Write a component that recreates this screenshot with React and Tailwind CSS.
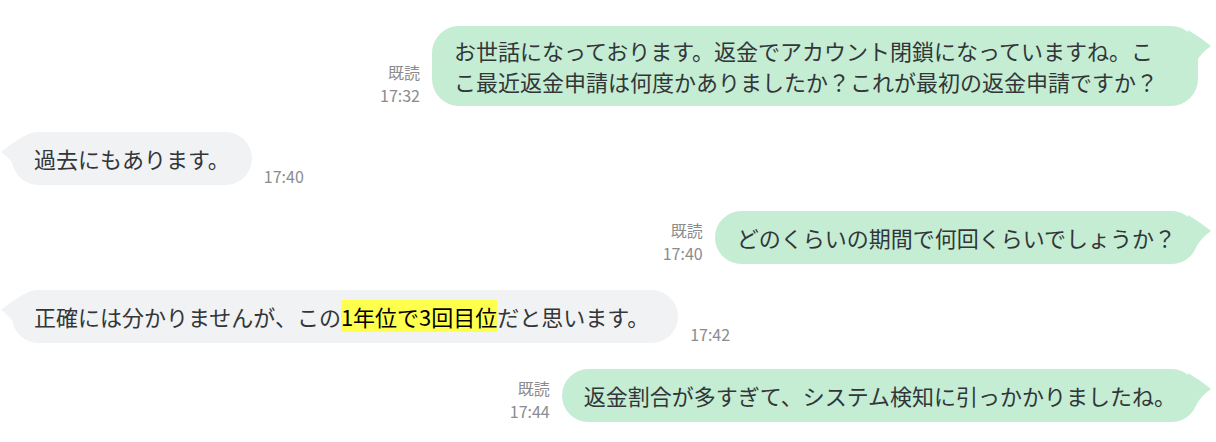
import React from 'react';

const messages = [
  {
    id: 1,
    me: true,
    time: '17:32',
    wide: true,
    text: 'お世話になっております。返金でアカウント閉鎖になっていますね。ここ最近返金申請は何度かありましたか？これが最初の返金申請ですか？',
  },
  { id: 2, me: false, time: '17:40', text: '過去にもあります。' },
  { id: 3, me: true, time: '17:40', text: 'どのくらいの期間で何回くらいでしょうか？' },
  {
    id: 4,
    me: false,
    time: '17:42',
    parts: [
      { t: '正確には分かりませんが、この' },
      { t: '1年位で3回目位', mark: true },
      { t: 'だと思います。' },
    ],
  },
  { id: 5, me: true, time: '17:44', text: '返金割合が多すぎて、システム検知に引っかかりましたね。' },
];

const Tail = ({ me }) =>
  me ? (
    <svg className="absolute top-[4px] right-[-13px]" width="23" height="32" viewBox="0 0 23 32">
      <path d="M0 0 Q12 7 23 16 Q14 22 8 32 L0 32 Z" fill="#c4edd4" />
    </svg>
  ) : (
    <svg className="absolute top-[4px] left-[-11px]" width="23" height="32" viewBox="0 0 23 32">
      <path d="M23 0 Q11 7 0 16 Q9 22 15 32 L23 32 Z" fill="#f1f2f4" />
    </svg>
  );

const Bubble = ({ m }) => (
  <div
    className={`relative min-h-[53px] flex items-center rounded-[27px] px-[22px] py-[9px] text-[22px] leading-[31px] text-[#333638] ${
      m.me ? 'bg-[#c4edd4]' : 'bg-[#f1f2f4]'
    } ${m.wide ? 'w-[766px]' : ''} ${m.parts ? 'pr-[29px]' : ''}`}
  >
    <Tail me={m.me} />
    <span className={`relative ${m.wide ? 'max-w-[712px]' : ''}`}>
      {m.parts
        ? m.parts.map((p, i) =>
            p.mark ? (
              <span key={i} className="bg-[#ffff4d] text-black">
                {p.t}
              </span>
            ) : (
              <span key={i}>{p.t}</span>
            )
          )
        : m.text}
    </span>
  </div>
);

export default function App() {
  return (
    <div
      className="w-[1216px] h-[442px] bg-white overflow-hidden pt-[26px] pl-[12px] pr-[18px] flex flex-col gap-[26px]"
      style={{ fontFamily: '"Noto Sans CJK JP", "Noto Sans", sans-serif' }}
    >
      {messages.map((m) =>
        m.me ? (
          <div key={m.id} className="flex justify-end items-end gap-[12px]">
            <div className="flex flex-col items-end text-[16px] leading-[23px] text-[#8a8c90] mb-[-1px]">
              <span>既読</span>
              <span>{m.time}</span>
            </div>
            <Bubble m={m} />
          </div>
        ) : (
          <div key={m.id} className="flex justify-start items-end gap-[12px]">
            <Bubble m={m} />
            <span className="text-[16px] leading-[23px] text-[#8a8c90] mb-[-3px]">{m.time}</span>
          </div>
        )
      )}
    </div>
  );
}
